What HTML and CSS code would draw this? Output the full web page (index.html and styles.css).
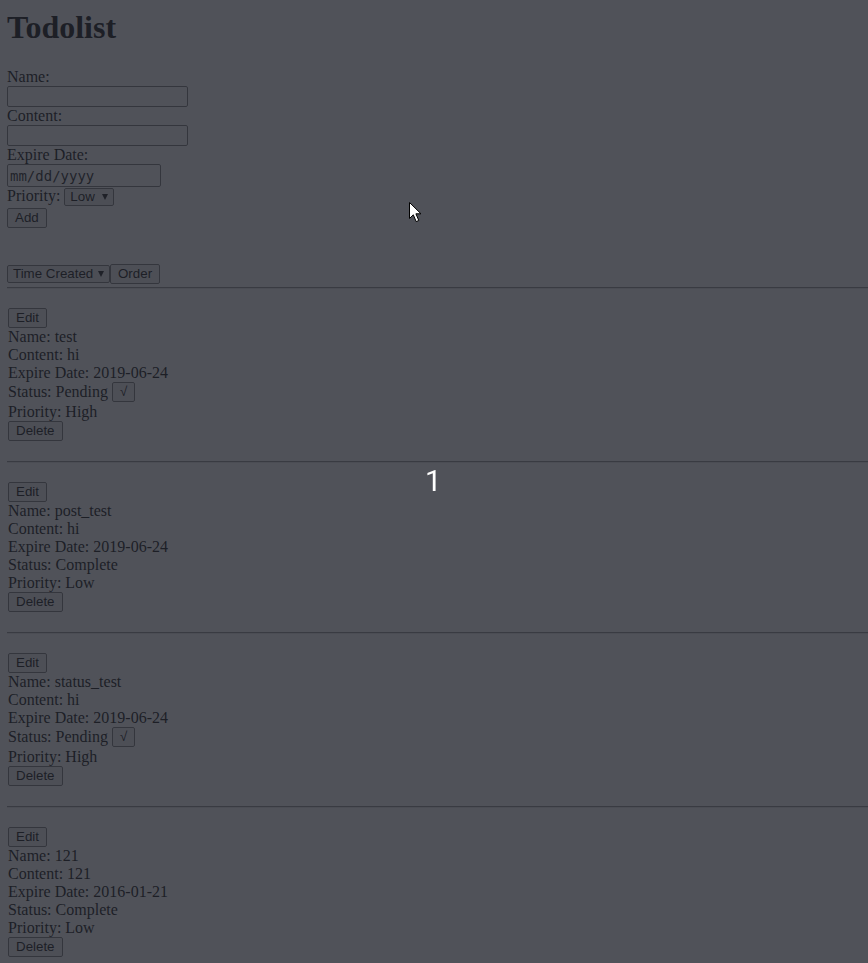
FILE: index.html
```html
<!DOCTYPE html>
<html lang="en">
<head>
<meta charset="utf-8">
<title>Todolist</title>
<link rel="stylesheet" href="styles.css">
</head>
<body>
<div class="app">
  <h1 class="title">Todolist</h1>
  <form class="add-form">
    <label class="field-label" for="name">Name:</label>
    <input class="text-input" id="name" type="text">
    <label class="field-label" for="content">Content:</label>
    <input class="text-input" id="content" type="text">
    <label class="field-label" for="expire">Expire Date:</label>
    <input class="date-input" id="expire" type="text" value="mm/dd/yyyy">
    <div class="priority-row"><label for="priority">Priority:</label> <span class="select-wrap"><select id="priority" class="ctl-select"><option>Low</option><option>High</option></select></span></div>
    <button type="button" class="btn btn-add">Add</button>
  </form>

  <div class="sort-bar"><span class="select-wrap"><select class="ctl-select"><option>Time Created</option><option>Expire Date</option><option>Priority</option></select></span><button type="button" class="btn">Order</button></div>

  <div class="todo-list">
    <hr class="divider">
    <div class="todo">
      <button type="button" class="btn">Edit</button>
      <div class="line">Name: test</div>
      <div class="line">Content: hi</div>
      <div class="line">Expire Date: 2019-06-24</div>
      <div class="line status-line"><span>Status: Pending</span><button type="button" class="btn">√</button></div>
      <div class="line">Priority: High</div>
      <button type="button" class="btn">Delete</button>
    </div>
    <hr class="divider">
    <div class="todo">
      <button type="button" class="btn">Edit</button>
      <div class="line">Name: post_test</div>
      <div class="line">Content: hi</div>
      <div class="line">Expire Date: 2019-06-24</div>
      <div class="line">Status: Complete</div>
      <div class="line">Priority: Low</div>
      <button type="button" class="btn">Delete</button>
    </div>
    <hr class="divider">
    <div class="todo">
      <button type="button" class="btn">Edit</button>
      <div class="line">Name: status_test</div>
      <div class="line">Content: hi</div>
      <div class="line">Expire Date: 2019-06-24</div>
      <div class="line status-line"><span>Status: Pending</span><button type="button" class="btn">√</button></div>
      <div class="line">Priority: High</div>
      <button type="button" class="btn">Delete</button>
    </div>
    <hr class="divider">
    <div class="todo">
      <button type="button" class="btn">Edit</button>
      <div class="line">Name: 121</div>
      <div class="line">Content: 121</div>
      <div class="line">Expire Date: 2016-01-21</div>
      <div class="line">Status: Complete</div>
      <div class="line">Priority: Low</div>
      <button type="button" class="btn">Delete</button>
    </div>
  </div>
</div>

<div class="dim-overlay"></div>
<div class="step-badge">1</div>
<svg class="mouse-cursor" width="14" height="21" viewBox="0 0 14 21" aria-hidden="true">
  <path d="M0.5 0.5 V16.5 L4.3 12.8 L7.2 19.6 L9.8 18.5 L6.9 11.8 H12 Z" fill="#ffffff" stroke="#000000" stroke-width="1" stroke-linejoin="miter"/>
</svg>
</body>
</html>
```

FILE: styles.css
```css
html {
  background: #ffffff;
}

body {
  margin: 8px 0 0 7px;
  font-family: "Liberation Serif", "Times New Roman", serif;
  font-size: 16px;
  line-height: normal;
  color: #000000;
}

.title {
  font-size: 32px;
  font-weight: bold;
  margin: 0 0 23px;
  padding-top: 1px;
  line-height: normal;
}

.add-form {
  display: flex;
  flex-direction: column;
  align-items: flex-start;
  margin-top: -1px;
}

.field-label {
  display: block;
}

.text-input {
  box-sizing: border-box;
  width: 181px;
  height: 21px;
  margin: 0;
  padding: 1px 2px;
  border: 1px solid #767676;
  border-radius: 2px;
  background: #ffffff;
  font: 13.33px "Liberation Sans", Arial, sans-serif;
}

.date-input {
  box-sizing: border-box;
  width: 154px;
  height: 23px;
  margin: 0;
  padding: 0 2px;
  border: 1px solid #767676;
  border-radius: 2px;
  background: #ffffff;
  color: #111111;
  font: 14px "DejaVu Sans Mono", "Liberation Mono", monospace;
}

.priority-row {
  line-height: normal;
}

.select-wrap {
  position: relative;
  display: inline-block;
}

.select-wrap::after {
  content: "";
  position: absolute;
  right: 6px;
  top: 6.5px;
  width: 0;
  height: 0;
  border-left: 3.5px solid transparent;
  border-right: 3.5px solid transparent;
  border-top: 6px solid #0a0a0a;
  pointer-events: none;
}

.ctl-select {
  -webkit-appearance: none;
  appearance: none;
  box-sizing: border-box;
  height: 18px;
  margin: 0;
  padding: 0 15px 0 5px;
  border: 1px solid #767676;
  border-radius: 2px;
  background: #ececec;
  color: #000000;
  font: 13.33px "Liberation Sans", Arial, sans-serif;
  line-height: 16px;
  vertical-align: baseline;
}

.btn {
  box-sizing: border-box;
  height: 20px;
  margin: 0;
  padding: 0 7px;
  border: 1px solid #767676;
  border-radius: 2px;
  background: #efefef;
  color: #000000;
  font: 13.33px "Liberation Sans", Arial, sans-serif;
  line-height: 18px;
}

.btn-add {
  margin-top: 1.5px;
}

.sort-bar {
  margin-top: 36.4px;
  display: flex;
  align-items: center;
}

.divider {
  margin: 3px 0 0;
  height: 0;
  border: 0;
  border-top: 1px solid #8a8a8a;
  border-bottom: 1px solid #e6e6e6;
}

.todo-list .divider ~ .divider {
  margin-top: 0;
}

.todo {
  display: flex;
  flex-direction: column;
  align-items: flex-start;
  padding: 18.8px 0 20.2px 1px;
}

.line {
  line-height: normal;
}

.status-line {
  display: flex;
  align-items: center;
  column-gap: 4px;
  height: 21px;
}

.dim-overlay {
  position: fixed;
  inset: 0;
  background: rgba(36, 39, 48, 0.8);
  z-index: 10;
}

.step-badge {
  position: absolute;
  left: 425px;
  top: 463px;
  z-index: 11;
  color: #ffffff;
  font: 29.5px Roboto, "Noto Sans", sans-serif;
  line-height: 36px;
}

.mouse-cursor {
  position: absolute;
  left: 408.5px;
  top: 202px;
  z-index: 12;
}
```
